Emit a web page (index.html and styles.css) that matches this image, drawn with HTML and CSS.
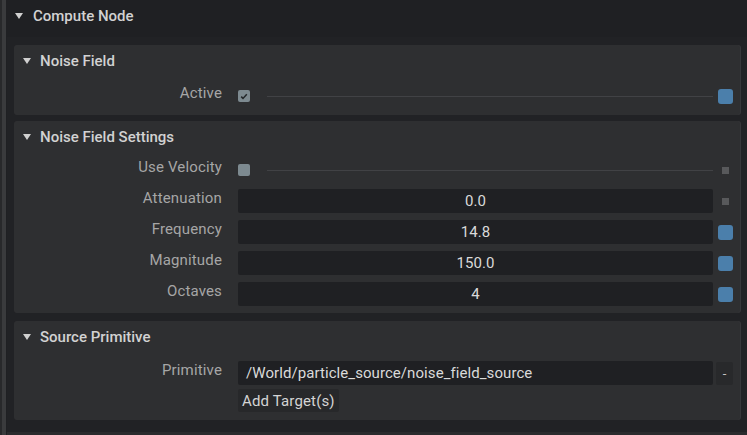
FILE: index.html
```html
<!DOCTYPE html>
<html>
<head>
<meta charset="utf-8">
<link rel="stylesheet" href="styles.css">
</head>
<body>
<div class="window">
  <div class="rail"></div>
  <div class="main">
    <div class="root-header">
      <svg class="tri" width="8" height="6" viewBox="0 0 8 6"><polygon points="0,0 8,0 4,6"/></svg>
      <span>Compute Node</span>
    </div>
    <div class="frame">
      <section class="box">
        <div class="box-header">
          <svg class="tri" width="8" height="6" viewBox="0 0 8 6"><polygon points="0,0 8,0 4,6"/></svg>
          <span>Noise Field</span>
        </div>
        <div class="box-body">
          <div class="row">
            <div class="label">Active</div>
            <div class="ctl-check">
              <span class="checkbox"><svg width="12" height="12" viewBox="0 0 12 12"><path d="M3.2 6.6 L5 8.4 L8.8 4.2" fill="none" stroke="#23272a" stroke-width="1.5"/></svg></span>
              <span class="track"></span>
            </div>
            <div class="trail"><span class="dot-blue"></span></div>
          </div>
        </div>
      </section>

      <section class="box">
        <div class="box-header">
          <svg class="tri" width="8" height="6" viewBox="0 0 8 6"><polygon points="0,0 8,0 4,6"/></svg>
          <span>Noise Field Settings</span>
        </div>
        <div class="box-body box-body--tight">
          <div class="row">
            <div class="label">Use Velocity</div>
            <div class="ctl-check">
              <span class="checkbox"></span>
              <span class="track"></span>
            </div>
            <div class="trail"><span class="dot-gray"></span></div>
          </div>
          <div class="row">
            <div class="label">Attenuation</div>
            <div class="field">0.0</div>
            <div class="trail"><span class="dot-gray"></span></div>
          </div>
          <div class="row">
            <div class="label">Frequency</div>
            <div class="field">14.8</div>
            <div class="trail"><span class="dot-blue"></span></div>
          </div>
          <div class="row">
            <div class="label">Magnitude</div>
            <div class="field">150.0</div>
            <div class="trail"><span class="dot-blue"></span></div>
          </div>
          <div class="row">
            <div class="label">Octaves</div>
            <div class="field">4</div>
            <div class="trail"><span class="dot-blue"></span></div>
          </div>
        </div>
      </section>

      <section class="box">
        <div class="box-header">
          <svg class="tri" width="8" height="6" viewBox="0 0 8 6"><polygon points="0,0 8,0 4,6"/></svg>
          <span>Source Primitive</span>
        </div>
        <div class="box-body box-body--loose">
          <div class="row">
            <div class="label">Primitive</div>
            <div class="field field--path">/World/particle_source/noise_field_source</div>
            <div class="trail"><span class="minus">-</span></div>
          </div>
          <div class="row row--btn">
            <div class="label"></div>
            <div class="ctl-btn"><span class="btn">Add Target(s)</span></div>
            <div class="trail"></div>
          </div>
        </div>
      </section>
    </div>
  </div>
</div>
</body>
</html>
```

FILE: styles.css
```css
* { box-sizing: border-box; }
html, body {
  margin: 0;
  padding: 0;
}
body {
  width: 747px;
  height: 435px;
  overflow: hidden;
  background: #1f2023;
  font-family: Roboto, "Noto Sans", "Liberation Sans", sans-serif;
  font-size: 15px;
  font-weight: 400;
  letter-spacing: 0.15px;
}
.window {
  display: flex;
  height: 435px;
}
.rail {
  width: 6px;
  border-left: 2px solid #28292b;
  background: #3a3b3d;
  flex: none;
}
.main {
  flex: 1;
  display: flex;
  flex-direction: column;
}
.tri { fill: #d0d0d0; flex: none; }
.root-header {
  height: 32px;
  display: flex;
  align-items: center;
  gap: 10px;
  padding-left: 9px;
  color: #d2d2d2;
  font-weight: 500;
  letter-spacing: 0;
}
.frame {
  flex: 1;
  margin: 5px 0 0 1px;
  padding: 8px 7px 0 7px;
  background: #212225;
  border-bottom: 3px solid #2a2b2d;
  display: flex;
  flex-direction: column;
  gap: 6px;
}
.frame .box + .box + .box { margin-top: 2px; }
.box {
  background: #2e2f31;
  border-radius: 3px;
  box-shadow: 1px 0 0 #36373a;
}
.box-header {
  height: 32px;
  display: flex;
  align-items: center;
  gap: 9px;
  padding-left: 9px;
  color: #d2d2d2;
  font-weight: 500;
  letter-spacing: 0;
}
.box-body {
  display: flex;
  flex-direction: column;
  gap: 7px;
  padding: 7px 0 7px;
}
.box-body--tight { padding-top: 5px; }
.box-body--loose { padding-top: 8px; padding-bottom: 8px; gap: 4px; }
.row {
  display: grid;
  grid-template-columns: 224px 475px 27px;
  height: 24px;
}
.row--btn { height: 23px; }
.label {
  align-self: start;
  text-align: right;
  padding-right: 16px;
  padding-top: 1px;
  line-height: 16px;
  color: #a6a6a6;
}
.ctl-check {
  display: flex;
  align-items: center;
  gap: 17px;
}
.checkbox {
  width: 12px;
  height: 12px;
  background: #7d8a90;
  border-radius: 2px;
  flex: none;
  display: block;
}
.checkbox svg { display: block; }
.track {
  flex: 1;
  height: 1px;
  background: #414245;
}
.trail {
  display: flex;
  align-items: center;
}
.dot-blue {
  width: 15px;
  height: 15px;
  margin-left: 5px;
  background: #4b7fab;
  border-radius: 3px;
}
.dot-gray {
  width: 7px;
  height: 7px;
  margin-left: 9px;
  background: #58595b;
}
.field {
  background: #1f2023;
  border-radius: 2px;
  display: flex;
  align-items: center;
  justify-content: center;
  color: #dadada;
  letter-spacing: 0.07px;
}
.field--path {
  justify-content: flex-start;
  padding-left: 8px;
}
.minus {
  margin-left: 3px;
  width: 17px;
  height: 23px;
  background: #28292b;
  border-radius: 2px;
  color: #c4c4c4;
  font-size: 13px;
  display: flex;
  align-items: center;
  justify-content: center;
}
.ctl-btn { display: flex; }
.btn {
  background: #27282a;
  border-radius: 2px;
  padding: 0 4px;
  color: #d4d4d4;
  display: flex;
  align-items: center;
}
```
